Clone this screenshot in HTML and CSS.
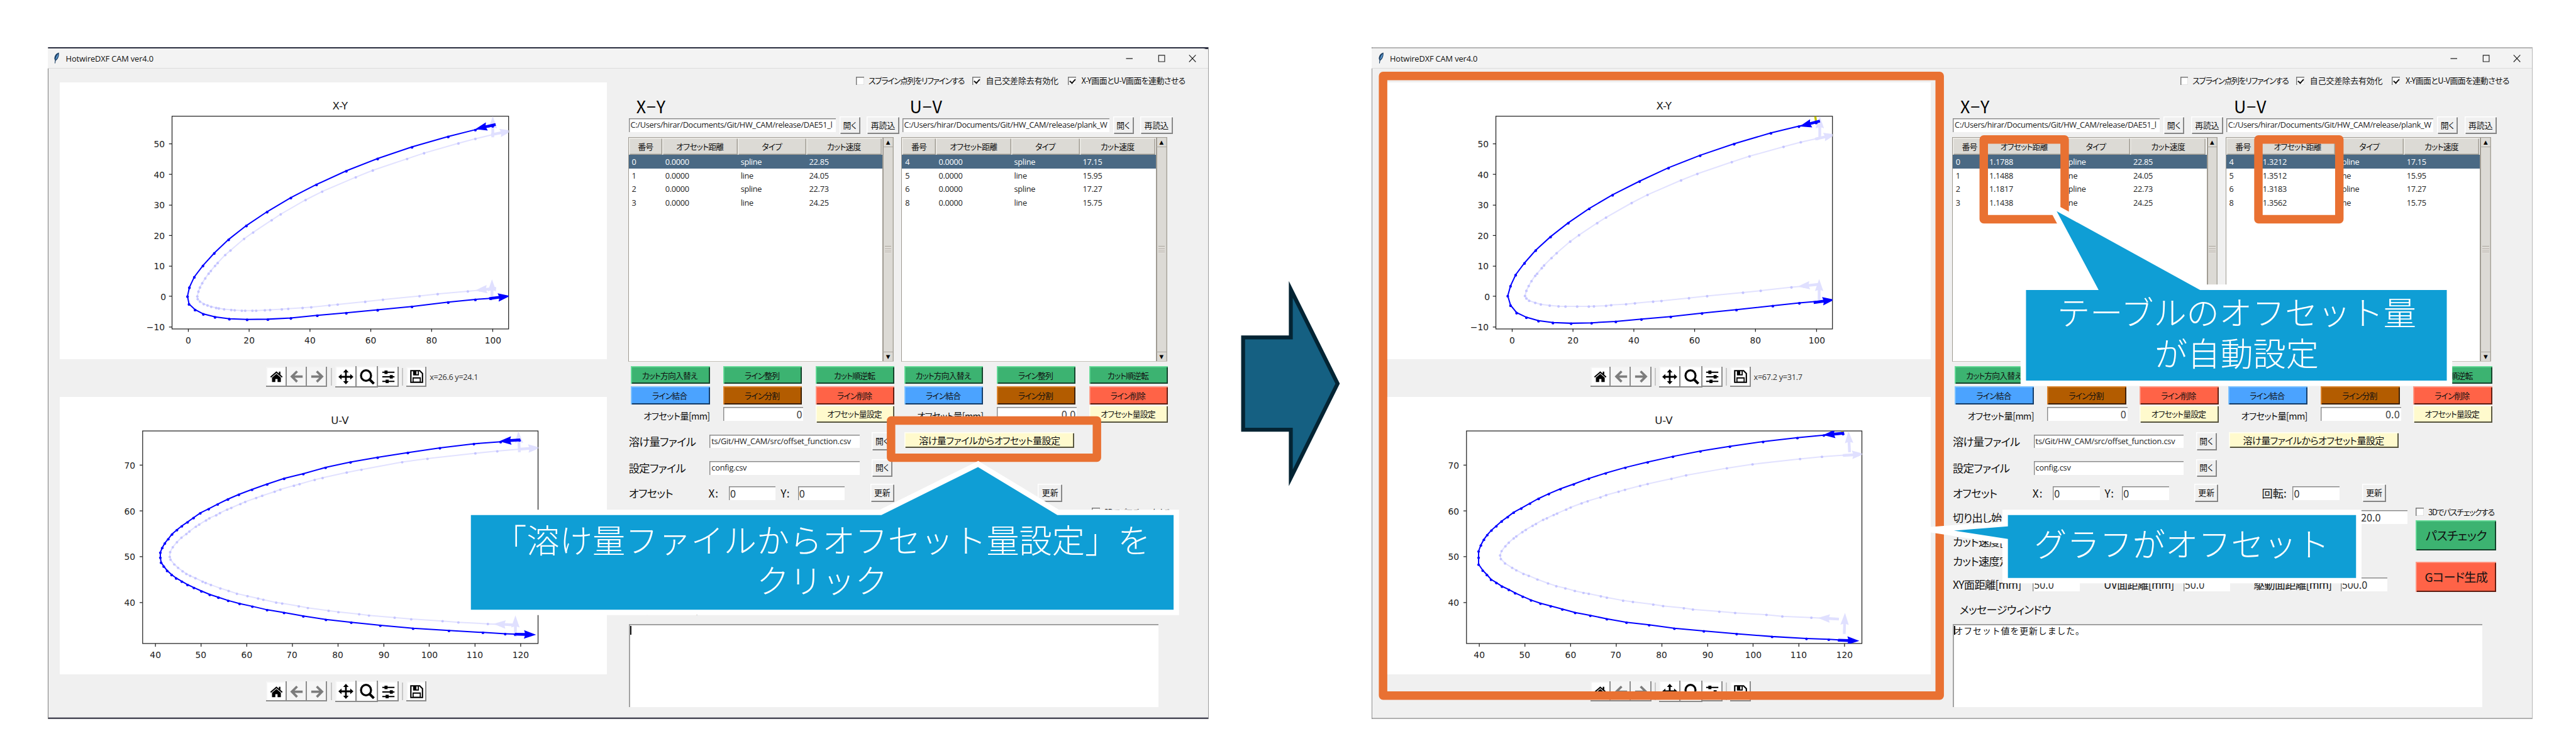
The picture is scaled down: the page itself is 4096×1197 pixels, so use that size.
FILE: index.html
```html
<!DOCTYPE html>
<html lang="ja">
<head>
<meta charset="utf-8">
<title>HotwireDXF CAM ver4.0</title>
<link rel="stylesheet" href="styles.css">
</head>
<body>

<svg class="defs" aria-hidden="true">
  <defs>
    <marker id="dot" class="mk" markerUnits="userSpaceOnUse" markerWidth="1" markerHeight="1"><ellipse cy="2" rx="3.6" ry="6" fill="#00f"/></marker>
    <marker id="dot-light" class="mk" markerUnits="userSpaceOnUse" markerWidth="1" markerHeight="1"><ellipse cy="1" rx="3.4" ry="5.8" fill="#c4c4ff"/></marker>
    <marker id="dot-b" class="mk" markerUnits="userSpaceOnUse" markerWidth="1" markerHeight="1"><ellipse cy="2" rx="2.9" ry="5.9" fill="#00f"/></marker>
    <marker id="dot-b-light" class="mk" markerUnits="userSpaceOnUse" markerWidth="1" markerHeight="1"><ellipse cy="1" rx="2.8" ry="5.7" fill="#c4c4ff"/></marker>
    <path id="head" d="M0 0L-20-7L-18.5-2.3H-35V2.3H-18.5L-20 7Z"/>
    <clipPath id="clip-xy"><rect x="285" y="192" width="557.5" height="352.3"/></clipPath>
    <clipPath id="clip-uv"><rect x="236.3" y="713.8" width="655" height="352"/></clipPath>

    <g id="axes-xy" class="axes">
      <rect x="285" y="192" width="557.5" height="352.3"/>
      <path d="M312 544v5M412.7 544v5M513.5 544v5M614.2 544v5M715 544v5M816.2 544v5M285 237.6h-5M285 288.3h-5M285 339.2h-5M285 389.6h-5M285 440.2h-5M285 490.2h-5M285 541h-5"/>
      <g class="mid"><text x="312" y="568">0</text><text x="412.7" y="568">20</text><text x="513.5" y="568">40</text><text x="614.2" y="568">60</text><text x="715" y="568">80</text><text x="816.7" y="568">100</text></g>
      <g class="end"><text x="273" y="243.2">50</text><text x="273" y="294">40</text><text x="273" y="344.7">30</text><text x="273" y="395.3">20</text><text x="273" y="445.7">10</text><text x="275" y="496.3">0</text><text x="273" y="546.7">−10</text></g>
      <text class="plot-title" x="563.5" y="181">X-Y</text>
    </g>
    <g id="axes-uv" class="axes">
      <rect x="236.3" y="713.8" width="655" height="352"/>
      <path d="M257.5 1066v5M333.1 1066v5M408.8 1066v5M484.4 1066v5M560 1066v5M635.9 1066v5M711 1066v5M786.9 1066v5M862.5 1066v5M236.3 770.4h-5M236.3 846.3h-5M236.3 922.1h-5M236.3 998h-5"/>
      <g class="mid"><text x="257.5" y="1089.5">40</text><text x="332.6" y="1089.5">50</text><text x="408.8" y="1089.5">60</text><text x="483.5" y="1089.5">70</text><text x="559.5" y="1089.5">80</text><text x="636" y="1089.5">90</text><text x="711.5" y="1089.5">100</text><text x="786.5" y="1089.5">110</text><text x="862.5" y="1089.5">120</text></g>
      <g class="end"><text x="224" y="776.3">70</text><text x="224" y="852">60</text><text x="224" y="927.7">50</text><text x="224" y="1003.5">40</text></g>
      <text class="plot-title" x="563" y="702.5">U-V</text>
    </g>

    <g id="before-xy" clip-path="url(#clip-xy)">
      <g class="light">
        <g transform="translate(60 60) scale(.625 .37628)"><polyline marker-mid="url(#dot-light)" marker-start="url(#dot-light)" points="1210,432 1164,450 1119,470 1028,513 983,538 892,589 847,619 758,682 714,719 648,782 624,808 575,862 551,890 515,941 501,961 481,996 474,1009 463,1031 457,1043 448,1064 440,1085 434,1104 430,1122 427,1143 428,1155 434,1166 444,1177 454,1183 464,1189 477,1194 484,1196 498,1200 517,1203 526,1204 545,1206 554,1206 573,1206 583,1206 606,1204 620,1203 651,1200 668,1198 706,1194 729,1191 777,1183 799,1179 872,1167 919,1158 1016,1142 1064,1133 1144,1121 1175,1116 1208,1110"/></g>
        <use href="#head" transform="translate(787 480.5) rotate(174)"/>
        <use href="#head" transform="translate(815 462) rotate(-90)"/>
        <use href="#head" transform="translate(816.3 192) rotate(-90)"/>
        <use href="#head" transform="translate(848 216) rotate(-11)"/>
      </g>
      <g class="dark">
        <g transform="translate(60 60) scale(.625 .37628)"><polyline marker-mid="url(#dot)" marker-start="url(#dot)" marker-end="url(#dot)" points="1210,393 1164,410 1092,440 996,486 905,537 822,591 743,651 675,709 612,771 557,832 510,893 472,953 442,1008 419,1058 406,1104 401,1143 405,1177 421,1202 443,1221 474,1234 512,1242 559,1245 614,1244 675,1239 745,1227 822,1216 905,1203 996,1188 1092,1169 1164,1157 1205,1152"/></g>
        <use href="#head" transform="translate(787 213.5) rotate(167)"/>
        <use href="#head" transform="translate(845 489.7) rotate(-7)"/>
      </g>
    </g>

    <g id="before-uv" clip-path="url(#clip-uv)">
      <g class="light">
        <g transform="translate(60 640) scale(.625 .35714)"><polyline marker-mid="url(#dot-light)" marker-start="url(#dot-light)" points="1282,291 1222,300 1164,310 1037,335 970,351 862,386 823,399 759,424 738,433 698,453 683,460 647,478 632,488 599,507 583,517 554,535 541,545 517,563 506,571 487,587 477,597 459,611 450,621 432,640 423,650 406,672 398,684 385,701 373,722 362,745 355,768 354,790 356,803 366,825 376,841 388,857 398,869 408,878 422,889 441,905 449,911 463,920 488,936 510,948 532,961 560,972 588,983 602,989 636,1002 652,1006 696,1019 720,1027 775,1040 801,1046 856,1056 882,1062 950,1072 994,1079 1077,1088 1119,1094 1197,1101 1233,1104 1270,1106"/></g>
        <use href="#head" transform="translate(817.5 1033.3) rotate(183)"/>
        <use href="#head" transform="translate(853.8 1019.3) rotate(-90)"/>
        <use href="#head" transform="translate(858.6 714) rotate(-93)"/>
        <use href="#head" transform="translate(895 741.5) rotate(-4)"/>
      </g>
      <g class="dark">
        <g transform="translate(60 640) scale(.625 .35714)"><polyline marker-mid="url(#dot)" marker-start="url(#dot)" marker-end="url(#dot)" points="1281,249 1231,257 1160,266 1070,285 985,307 905,329 833,351 767,376 708,405 657,427 612,453 572,478 537,501 508,523 481,546 457,568 435,587 417,609 401,629 386,647 373,665 360,685 350,707 341,727 334,748 329,770 329,793 331,816 338,834 347,854 359,873 371,889 386,904 401,919 418,933 438,949 460,965 483,978 509,993 539,1007 573,1020 612,1036 657,1049 708,1065 768,1081 835,1094 912,1108 999,1122 1094,1132 1184,1141 1243,1147 1269,1149"/></g>
        <use href="#head" transform="translate(827 731) rotate(176)"/>
        <use href="#head" transform="translate(888 1051.3) rotate(1.5)"/>
      </g>
    </g>

    <g id="after-xy" clip-path="url(#clip-xy)">
      <g class="light">
        <g transform="translate(-173 60) scale(.77168 .38265)"><polyline marker-mid="url(#dot-b-light)" marker-start="url(#dot-b-light)" points="1284,441 1248,457 1211,477 1138,518 1100,543 1026,594 991,622 919,685 885,720 830,783 811,807 772,859 753,887 724,937 713,958 697,990 692,1002 682,1026 678,1035 670,1058 664,1079 659,1100 656,1122 659,1133 665,1143 678,1152 690,1159 709,1164 728,1167 743,1168 768,1168 793,1168 804,1167 830,1165 841,1162 873,1158 892,1154 931,1147 949,1144 1008,1132 1047,1123 1124,1108 1162,1100 1228,1085 1254,1081 1278,1076"/></g>
        <use href="#head" transform="translate(785 474) rotate(174)"/>
        <use href="#head" transform="translate(820.5 461.5) rotate(-90)"/>
        <use href="#head" transform="translate(821.5 192) rotate(-90)"/>
        <use href="#head" transform="translate(848 222) rotate(-13)"/>
      </g>
      <g class="dark">
        <path class="lead-in" d="M814 192L816 205"/>
        <g transform="translate(-173 60) scale(.77168 .38265)"><polyline marker-mid="url(#dot-b)" marker-start="url(#dot-b)" marker-end="url(#dot-b)" points="1281,372 1244,388 1184,417 1105,464 1032,514 964,568 902,626 844,685 794,744 749,806 711,866 679,925 655,980 636,1031 625,1079 619,1122 625,1163 638,1195 659,1215 685,1230 716,1238 755,1241 799,1239 851,1233 906,1223 969,1212 1036,1197 1110,1182 1188,1165 1245,1153 1281,1147"/></g>
        <use href="#head" transform="translate(788 209) rotate(165)"/>
        <use href="#head" transform="translate(846 495.7) rotate(-8)"/>
      </g>
    </g>

    <g id="after-uv" clip-path="url(#clip-uv)">
      <g class="light">
        <g transform="translate(67 640) scale(.625 .35714)"><polyline marker-mid="url(#dot-light)" marker-start="url(#dot-light)" points="1272,319 1213,326 1155,336 1029,361 961,379 853,412 814,428 751,452 731,461 691,479 674,488 641,504 626,514 592,532 576,542 547,561 535,571 511,589 502,596 484,611 474,618 455,637 446,646 428,665 419,675 403,695 396,704 383,724 374,741 364,763 360,783 362,800 373,820 392,841 403,852 422,869 436,878 459,895 487,913 509,926 533,936 558,948 581,957 595,961 627,973 643,979 686,993 712,999 766,1011 792,1018 847,1028 871,1034 941,1044 983,1050 1066,1059 1108,1066 1185,1072 1222,1076 1258,1079"/></g>
        <use href="#head" transform="translate(818.3 1023.5) rotate(183)"/>
        <use href="#head" transform="translate(863.3 1015) rotate(-88)"/>
        <use href="#head" transform="translate(869 714) rotate(-93)"/>
        <use href="#head" transform="translate(895 752) rotate(-4)"/>
      </g>
      <g class="dark">
        <path class="lead-in" d="M858.7 714v4"/>
        <g transform="translate(67 640) scale(.625 .35714)"><polyline marker-mid="url(#dot)" marker-start="url(#dot)" marker-end="url(#dot)" points="1269,220 1218,226 1148,238 1057,256 969,278 891,300 818,325 751,351 692,376 640,402 595,427 555,453 520,475 489,498 462,520 439,542 416,565 396,584 380,605 364,625 350,647 337,667 326,688 317,710 309,736 303,764 303,793 303,825 314,853 325,873 336,895 350,910 365,927 383,942 400,958 420,974 442,991 467,1006 494,1018 525,1033 559,1049 599,1062 643,1078 695,1094 755,1106 822,1122 900,1134 987,1147 1081,1160 1172,1169 1231,1173 1258,1176"/></g>
        <use href="#head" transform="translate(827 720.5) rotate(175)"/>
        <use href="#head" transform="translate(887 1061.5) rotate(2)"/>
      </g>
    </g>

    <symbol id="i-home" viewBox="0 0 24 24"><path d="M12 2.5L.8 12.3l1.5 1.6L12 5.6l9.7 8.3 1.5-1.6-4-3.5V3.2h-2.7v3.2z"/><path d="M12 7.2L4 14v8h6v-5.5h4V22h6v-8z"/></symbol>
    <symbol id="i-back" viewBox="0 0 24 24"><path d="M13 2.5L3.5 12l9.5 9.5M4 12h19" fill="none" stroke="#7c7c7c" stroke-width="4.2"/></symbol>
    <symbol id="i-forward" viewBox="0 0 24 24"><path d="M11 2.5l9.5 9.5-9.5 9.5M20 12H1" fill="none" stroke="#7c7c7c" stroke-width="4.2"/></symbol>
    <symbol id="i-pan" viewBox="0 0 26 26"><path d="M13 0l4.8 5.500h-3.300v6h6V8.200L26 13l-5.500 4.800v-3.300h-6v6h3.300L13 26l-4.800-5.500h3.300v-6h-6v3.300L0 13l5.500-4.800v3.300h6v-6H8.200z"/></symbol>
    <symbol id="i-zoom" viewBox="0 0 24 24"><ellipse cx="10" cy="10" rx="8" ry="8.3" fill="none" stroke="#000" stroke-width="3.2"/><path d="M15.500 16l7 7" stroke="#000" stroke-width="4"/></symbol>
    <symbol id="i-sliders" viewBox="0 0 24 24"><path d="M1 4.2h22M1 12.5h22M1 20.8h22" stroke="#000" stroke-width="2.4"/><path d="M5 1h5.500v6.400H5zM14.500 9.300H20v6.400h-5.500zM7 17.600h5.500V24H7z"/></symbol>
    <symbol id="i-save" viewBox="0 0 24 24"><path d="M1.500 1.500h16l5 5v16h-21z" fill="none" stroke="#000" stroke-width="2.4"/><path d="M5.500 1h10.500v9H5.500zM4.500 13.500h15V22h-15z"/><path d="M11.500 2.500h2.500v5.500h-2.500zM6.500 15.500h11V21h-11z" fill="#fff"/></symbol>
  </defs>
</svg>

<template id="app-window">
  <header class="titlebar">
    <svg class="feather" viewBox="0 0 10 19"><path d="M9 .5C4 2 1.5 6 1.500 11l1 2.500-.5 5h1l.8-4.500C7.500 12 9.800 6 9 .5z" fill="#1c3f63"/><path d="M8 2.500C5 5 3.600 9 3.300 12.500 6.500 10 8 7 8 2.500z" fill="#5b97cf"/></svg>
    <span class="caption">HotwireDXF CAM ver4.0</span>
    <svg class="controls" viewBox="0 0 120 14"><path d="M.5 7.500h11M54.500 2h10v10.500h-10zM105 1.500l11 11.500M116 1.500L105 13"/></svg>
  </header>
  <main class="client">
    <section class="plots">
      <svg class="figure" viewBox="99 136 906 459"><use href="#axes-xy"/><use data-plot="xy"/></svg>
      <div class="toolbar first">
        <div class="tool"><svg><use href="#i-home"/></svg></div><div class="tool off"><svg><use href="#i-back"/></svg></div><div class="tool off"><svg><use href="#i-forward"/></svg></div><i class="sep"></i><div class="tool big"><svg><use href="#i-pan"/></svg></div><div class="tool big"><svg><use href="#i-zoom"/></svg></div><div class="tool"><svg><use href="#i-sliders"/></svg></div><i class="sep"></i><div class="tool"><svg><use href="#i-save"/></svg></div><span class="coords" data-coords></span>
      </div>
      <svg class="figure" viewBox="99 657.5 906 459"><use href="#axes-uv"/><use data-plot="uv"/></svg>
      <div class="toolbar second">
        <div class="tool"><svg><use href="#i-home"/></svg></div><div class="tool off"><svg><use href="#i-back"/></svg></div><div class="tool off"><svg><use href="#i-forward"/></svg></div><i class="sep"></i><div class="tool big"><svg><use href="#i-pan"/></svg></div><div class="tool big"><svg><use href="#i-zoom"/></svg></div><div class="tool"><svg><use href="#i-sliders"/></svg></div><i class="sep"></i><div class="tool"><svg><use href="#i-save"/></svg></div>
      </div>
    </section>

    <section class="panel">
      <div class="options">
        <span class="check"><i class="box"></i><span class="refine">スプライン点列をリファインする</span></span>
        <span class="check"><i class="box on"></i><span class="self-cross">自己交差除去有効化</span></span>
        <span class="check"><i class="box on"></i><span class="linked">X-Y画面とU-V画面を連動させる</span></span>
      </div>
      <div class="halves">
        <div class="half">
          <h2>X−Y</h2>
          <div class="source"><span class="entry path">C:/Users/hirar/Documents/Git/HW_CAM/release/DAE51_l</span><span class="btn open">開く</span><span class="btn reload">再読込</span></div>
          <div class="table" data-table="xy"></div>
          <div class="actions">
            <span class="btn green">カット方向入替え</span><span class="btn green">ライン整列</span><span class="btn green">カット順逆転</span>
            <span class="btn blue">ライン結合</span><span class="btn brown">ライン分割</span><span class="btn red">ライン削除</span>
            <span class="amount">オフセット量[mm]</span><span class="entry num">0</span><span class="btn yellow">オフセット量設定</span>
          </div>
        </div>
        <div class="half">
          <h2>U−V</h2>
          <div class="source"><span class="entry path">C:/Users/hirar/Documents/Git/HW_CAM/release/plank_W</span><span class="btn open">開く</span><span class="btn reload">再読込</span></div>
          <div class="table" data-table="uv"></div>
          <div class="actions">
            <span class="btn green">カット方向入替え</span><span class="btn green">ライン整列</span><span class="btn green">カット順逆転</span>
            <span class="btn blue">ライン結合</span><span class="btn brown">ライン分割</span><span class="btn red">ライン削除</span>
            <span class="amount">オフセット量[mm]</span><span class="entry num">0.0</span><span class="btn yellow">オフセット量設定</span>
          </div>
        </div>
      </div>
      <div class="line melt"><span class="label key">溶け量ファイル</span><span class="entry file">ts/Git/HW_CAM/src/offset_function.csv</span><span class="btn open">開く</span><span class="btn yellow wide">溶け量ファイルからオフセット量設定</span></div>
      <div class="line config"><span class="label key">設定ファイル</span><span class="entry file">config.csv</span><span class="btn open">開く</span></div>
      <div class="line shift"><span class="label key">オフセット</span><span class="label x">X:</span><span class="entry val">0</span><span class="label y">Y:</span><span class="entry val">0</span><span class="btn update">更新</span><span class="label rot">回転:</span><span class="entry val">0</span><span class="btn update last">更新</span></div>
      <div class="lower">
        <div class="params">
          <div class="line start"><span class="label">切り出し始点</span><span class="entry val far">20.0</span></div>
          <div class="line speed"><span class="label">カット速度[</span></div>
          <div class="line speed2"><span class="label">カット速度定</span></div>
          <div class="line dist"><span class="label d1">XY面距離[mm]</span><span class="entry val">50.0</span><span class="label d2">UV面距離[mm]</span><span class="entry val">50.0</span><span class="label d3">駆動面距離[mm]</span><span class="entry val">500.0</span></div>
        </div>
        <div class="run">
          <span class="check"><i class="box"></i><span class="check-3d">3Dでパスチェックする</span></span>
          <span class="btn green large">パスチェック</span>
          <span class="btn red large">Gコード生成</span>
        </div>
      </div>
      <div class="label message-label">メッセージウィンドウ</div>
      <div class="message"><i class="caret"></i><span data-message></span></div>
    </section>
  </main>
</template>

<div class="slide">
  <div class="window dark-edge" data-state="before"></div>
  <svg class="next" viewBox="2050 455 176 360"><path d="M2059 558.5H2138V479L2215.5 635 2138 791V711.5H2059Z"/></svg>
  <div class="window" data-state="after"></div>

  <svg class="overlay" viewBox="0 0 4267 1247">
    <g class="frames">
      <rect x="1476" y="696.5" width="341" height="61.5"/>
      <rect x="2291" y="125.7" width="922" height="1026.3"/>
      <rect x="3286" y="231" width="134" height="132"/>
      <rect x="3741" y="231" width="134" height="132"/>
    </g>
    <g class="callouts">
      <path d="M780 853H1460L1620 773.5 1751.5 853H1944V1009.7H780Z"/>
      <path d="M3356 480.2H3476.3L3406.8 349.7 3644.4 480.2H4053V630.2H3356Z"/>
      <path d="M3326 853H3902.7V957H3326V892.4L3236.7 878.6 3326 871.7Z"/>
      <text x="1362" y="915.5">「溶け量ファイルからオフセット量設定」を</text>
      <text x="1362" y="982">クリック</text>
      <text x="3705" y="539">テーブルのオフセット量</text>
      <text x="3705" y="606">が自動設定</text>
      <text x="3614" y="921.5">グラフがオフセット</text>
    </g>
  </svg>
</div>
<script src="app.js"></script>
</body>
</html>
```
FILE: styles.css
```css
* { box-sizing: border-box; }
html, body { margin: 0; padding: 0; background: #fff; overflow: hidden; }
body {
  zoom: 0.95992;
  font-family: "Noto Sans CJK JP", sans-serif;
  font-feature-settings: "palt";
  color: #111;
}
.defs { position: absolute; width: 0; height: 0; }
.mk { overflow: visible; }
i { display: block; font-style: normal; }

.slide {
  position: relative;
  width: 4267px;
  height: 1247px;
  padding: 78px 0 0 79px;
  display: flex;
  align-items: flex-start;
  overflow: hidden;
}
.window {
  flex: none;
  width: 1923px;
  height: 1113px;
  background: #f0f0f0;
  box-shadow: inset 1px 0 #8a8a8a, inset -1px 0 #b5b5b5, inset 0 -2px #b0b0b0, inset 0 2px #b5b5b5;
}
.dark-edge { box-shadow: inset 1px 0 #777, inset -1px 0 #999, inset 0 -2.5px #4a4a58, inset 0 3px #2b2e40; }
.next { flex: none; width: 176px; height: 360px; margin: 377px 46.3px 0 48px; overflow: visible; }
.next path { fill: #156082; stroke: #042433; stroke-width: 6.5; stroke-miterlimit: 8; }

/* title bar */
.titlebar {
  height: 34px;
  margin: 2px 1px 0 0;
  border-radius: 0 8px 0 0;
  background: #f3f3f3;
  border-bottom: 1.5px solid #dcdcdc;
  display: flex;
  align-items: center;
  padding-left: 10px;
}
.feather { width: 10px; height: 19px; }
.caption { flex: 1; margin-left: 10px; font: 13.4px "Open Sans", sans-serif; letter-spacing: -.15px; color: #111; }
.controls { width: 120px; height: 14px; margin-right: 16px; fill: none; stroke: #222; stroke-width: 1.2; }

.client { display: flex; }

/* plots */
.plots { width: 906px; margin-left: 20px; padding-top: 22px; }
.figure { display: block; width: 906px; height: 459px; background: #fff; }
.axes { font: 14.4px "DejaVu Sans", sans-serif; fill: #1c1c1c; }
.axes rect, .axes path { fill: none; stroke: #222; stroke-width: 1.3; }
.axes .mid, .plot-title { text-anchor: middle; }
.axes .end { text-anchor: end; }
.plot-title { font-size: 17.3px; }
polyline { fill: none; stroke: #00f; stroke-width: 2.1px; vector-effect: non-scaling-stroke; }
.light polyline { stroke: #e2e2ff; }
.light use { fill: #e0e0ff; }
.dark use { fill: #00f; }
.lead-in { stroke: #bfbf00; stroke-width: 3.5; }

.toolbar { display: flex; align-items: center; height: 62.5px; padding: 0 0 6px 342px; }
.first { padding-bottom: 5px; }
.second { padding-bottom: 5px; }
.tool {
  width: 33.7px; height: 33.5px;
  background: #fff;
  box-shadow: inset -2px -2px #8a8a8a, inset 2px 2px #f4f4f4;
  display: flex; align-items: center; justify-content: center;
}
.tool.big { width: 35.7px; height: 35.7px; }
.tool.off { background: #f5f5f5; }
.tool svg { width: 22px; height: 22px; }
.tool.big svg { width: 25px; height: 25px; }
.sep { width: 2px; height: 29px; margin: 0 5.5px; background: #c8c8c8; }
.coords { margin-left: 5px; font: 13.3px "Open Sans", sans-serif; color: #333; letter-spacing: -.35px; }

/* right-hand panel */
.panel { margin-left: 36.5px; width: 925px; }
.options { display: flex; height: 39px; align-items: center; padding-left: 376.5px; }
.check { display: flex; align-items: center; font-size: 13.4px; white-space: nowrap; }
.check span { line-height: 16px; }
.box {
  width: 13.5px; height: 13.5px; margin-right: 7px;
  background: #fff;
  box-shadow: inset 1.5px 1.5px #777, inset -1px -1px #e3e3e3;
  position: relative;
}
.box.on { margin-right: 9px; }
.box.on::after {
  content: ""; position: absolute; left: 3.2px; top: 3px; width: 7.5px; height: 4.5px;
  border: solid #111; border-width: 0 0 2.2px 2.2px; transform: rotate(-48deg);
}
.refine { width: 172px; letter-spacing: -1.4px; }
.self-cross { width: 136px; }
.linked { letter-spacing: -.55px; }
.check-3d { letter-spacing: -1.3px; }

.halves { display: flex; }
.half { width: 453px; }
h2 { margin: 0 0 0 12.5px; height: 39px; font-size: 28px; line-height: 46px; font-weight: 400; letter-spacing: .9px; color: #000; }
.source { display: flex; align-items: center; height: 31px; }
.entry {
  display: block; background: #fff; overflow: hidden; white-space: nowrap; color: #222;
  box-shadow: inset 1.5px 1.5px #8b8b8b;
}
.path, .file { font: 13.3px/22px "Open Sans", sans-serif; padding-left: 3px; }
.path { width: 343px; height: 22.5px; letter-spacing: -.33px; }
.btn {
  display: flex; align-items: center; justify-content: center; white-space: nowrap;
  font-size: 13.4px; color: #111; background: #f0f0f0;
  box-shadow: inset 1.5px 1.5px #fff, inset -2px -2px #858585;
}
.source .btn, .line .open { height: 29.7px; width: 34.5px; }
.source .open { margin-left: 6px; }
.source .reload { width: 53.5px; margin-left: 11px; }
.source .btn, .open, .update { padding-bottom: 2px; }

.table {
  display: flex; width: 440px; height: 372px; margin: 4px 0 0 -1.2px;
  background: #fff; border: 2px solid #9e9a91; border-color: #9e9a91 transparent #c5c1b9 #9e9a91;
  border-right: 0;
}
.rows { flex: 1; }
.row, .thead { display: grid; grid-template-columns: 55.5px 125px 113.5px 125px; }
.row { height: 22.6px; align-items: center; font: 13.3px "Open Sans", sans-serif; letter-spacing: -.3px; color: #222; }
.row span { padding-left: 5px; }
.row.sel { background: #4a6984; color: #fff; }
.thead { height: 28.3px; font-size: 13.4px; }
.thead span {
  background: #dcdad5; display: flex; align-items: center; justify-content: center; letter-spacing: -.8px;
  box-shadow: inset 1.5px 1.5px #f0eeea, inset -1.5px -1.5px #9e9a91;
}
.scroll { width: 18.5px; display: flex; flex-direction: column; background: #dcdad5; box-shadow: inset 2px 0 #9e9a91, inset -1.5px 0 #a8a49b; }
.scroll b { height: 15.5px; font: 9px/15px "DejaVu Sans", sans-serif; text-align: center; color: #000; border-bottom: 2px solid #aaa69d; }
.scroll b:last-child { border: 0; border-top: 2px solid #aaa69d; }
.thumb { flex: 1; display: flex; align-items: center; justify-content: center; }
.thumb::after { content: ""; width: 11px; height: 11px; background: repeating-linear-gradient(#9e9a91 0 1.2px, #eeebe7 1.2px 3.2px); }

.actions {
  display: grid; grid-template-columns: 131px 131px 131px; grid-template-rows: 33.9px 30.6px 30px;
  column-gap: 22.1px; margin: 7.2px 0 0 3.2px; align-items: start;
}
.actions .btn { height: 29.6px; letter-spacing: -.9px; padding-right: 2px; }
.btn.green { background: #3cb371; box-shadow: inset 1.8px 1.8px #69dd9b, inset -2px -2px #14402a; }
.btn.blue { background: #4ba3ff; box-shadow: inset 1.8px 1.8px #84c6ff, inset -2px -2px #123a66; }
.btn.brown { background: #b35c00; box-shadow: inset 1.8px 1.8px #e08a35, inset -2px -2px #3c1f00; }
.btn.red { background: #ff6347; box-shadow: inset 1.8px 1.8px #ff9d8b, inset -2px -2px #5e1c10; }
.btn.yellow { background: #fffacd; box-shadow: inset 1.8px 1.8px #fffef2, inset -2px -2px #55533c; }
.amount { text-align: right; font-size: 15px; line-height: 20px; padding-top: 8px; letter-spacing: -.7px; white-space: nowrap; }
.num { height: 23px; margin-top: 3.5px; width: 133px; text-align: right; font-size: 17px; line-height: 23px; padding-right: 2px; color: #444; }

.line { display: flex; align-items: center; }
.label { font-size: 18px; line-height: 22px; white-space: nowrap; letter-spacing: -.7px; }
.key { width: 134px; flex: none; }
.file { width: 248.7px; height: 22.7px; flex: none; letter-spacing: -.2px; }
.val { width: 77.5px; height: 23px; padding-left: 2px; font-size: 17px; line-height: 23px; color: #333; flex: none; }
.melt { height: 30px; margin-top: 15.3px; }
.melt .open, .config .open { margin-left: 20px; }
.wide { width: 281.5px; height: 26px; margin: 0 0 4px 19.7px; font-size: 15.7px; letter-spacing: -.6px; }
.config { height: 30px; margin-top: 14px; }
.shift { height: 30px; margin-top: 11.7px; }
.shift .key { width: 72px; }
.x { width: 34px; margin-left: 60px; letter-spacing: 1px; }
.y { width: 29px; margin-left: 8px; letter-spacing: 1px; }
.update { width: 40px; height: 30px; margin-left: 42px; }
.rot { width: 51px; margin-left: 72px; letter-spacing: 0; }
.update.last { margin-left: 37.5px; }

.lower { display: flex; height: 166px; margin-top: 8px; }
.params { width: 767px; }
.start { height: 34px; }
.far { width: 120px; margin-left: auto; margin-right: 14px; padding-left: 43px; }
.speed { height: 41px; padding-top: 5px; }
.speed2 { height: 29px; }
.dist { height: 42px; padding-top: 6px; }
.d1 { width: 132.5px; }
.d2 { width: 132px; margin-left: 40px; }
.d3 { width: 144px; margin-left: 39px; }
.run { width: 135px; }
.run .check { height: 16px; }
.large { width: 133.5px; height: 50px; font-size: 20px; letter-spacing: -.7px; }
.run .green { margin-top: 6.5px; }
.run .red { margin-top: 18px; }
.message-label { margin: -9px 0 0 11px; height: 37px; line-height: 24px; }
.message {
  width: 877px; height: 137.5px; background: #fff; box-shadow: inset 2px 2px #a0a0a0;
  display: flex; font-size: 14.5px; letter-spacing: .95px; line-height: 17px; padding: 2px 0 0 1.5px;
  font-feature-settings: normal;
}
.caret { width: 1.5px; height: 15px; margin: 1px 0 0 1px; background: #111; }
.message span { margin-left: -1.5px; }

/* annotations over the windows */
.overlay { position: absolute; left: 0; top: 0; width: 4267px; height: 1247px; }
.frames rect { fill: none; stroke: #e97132; stroke-width: 14px; stroke-linejoin: round; }
.callouts path { fill: #0f9ed5; stroke: #fff; stroke-width: 18px; paint-order: stroke; stroke-miterlimit: 20; }
.callouts text { fill: #fff; text-anchor: middle; font: 300 54.4px "Noto Sans CJK JP", sans-serif; font-feature-settings: normal; }
```
FILE: app.js
```js
const tables = {
  xy: { ids: [0, 1, 2, 3], types: ['spline', 'line', 'spline', 'line'], speeds: ['22.85', '24.05', '22.73', '24.25'] },
  uv: { ids: [4, 5, 6, 8], types: ['spline', 'line', 'spline', 'line'], speeds: ['17.15', '15.95', '17.27', '15.75'] },
};
const states = {
  before: {
    coords: 'x=26.6 y=24.1', message: '',
    xy: ['0.0000', '0.0000', '0.0000', '0.0000'], uv: ['0.0000', '0.0000', '0.0000', '0.0000'],
  },
  after: {
    coords: 'x=67.2 y=31.7', message: 'オフセット値を更新しました。',
    xy: ['1.1788', '1.1488', '1.1817', '1.1438'], uv: ['1.3212', '1.3512', '1.3183', '1.3562'],
  },
};

function tableHtml(table, offsets) {
  const cells = list => list.map(text => `<span>${text}</span>`).join('');
  const rows = table.ids.map((id, i) =>
    `<div class="row${i ? '' : ' sel'}">${cells([id, offsets[i], table.types[i], table.speeds[i]])}</div>`).join('');
  return `<div class="rows"><div class="thead">${cells(['番号', 'オフセット距離', 'タイプ', 'カット速度'])}</div>${rows}</div>
    <div class="scroll"><b>▲</b><div class="thumb"></div><b>▼</b></div>`;
}

const template = document.getElementById('app-window');
document.querySelectorAll('.window').forEach(win => {
  const name = win.dataset.state;
  const state = states[name];
  win.append(template.content.cloneNode(true));
  win.querySelectorAll('[data-plot]').forEach(use => use.setAttribute('href', `#${name}-${use.dataset.plot}`));
  win.querySelectorAll('[data-table]').forEach(el => {
    el.innerHTML = tableHtml(tables[el.dataset.table], state[el.dataset.table]);
  });
  win.querySelector('[data-coords]').textContent = state.coords;
  win.querySelector('[data-message]').textContent = state.message;
});
```
